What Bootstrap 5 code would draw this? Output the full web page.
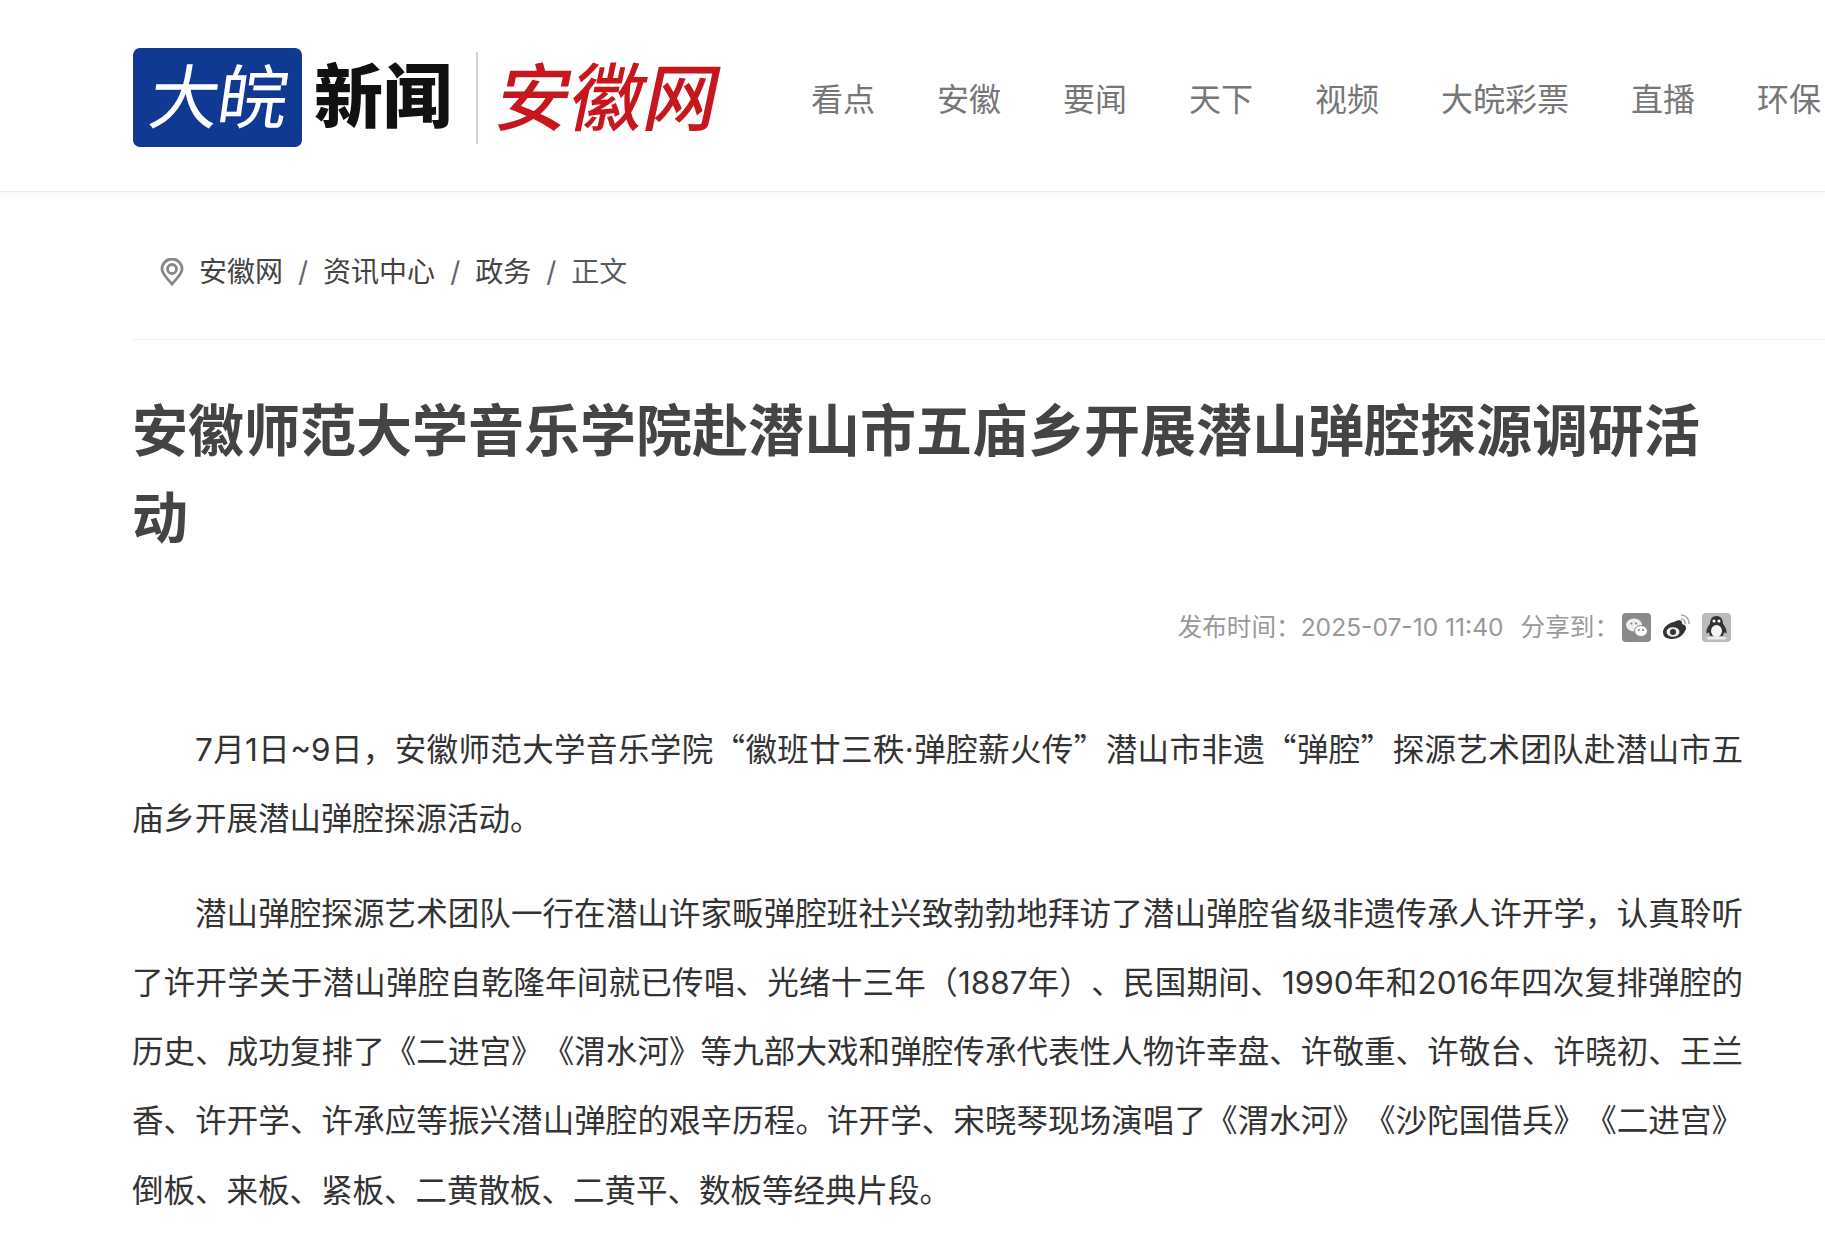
<!DOCTYPE html>
<html lang="zh-CN">
<head>
  <meta charset="UTF-8">
  <title>安徽师范大学音乐学院赴潜山市五庙乡开展潜山弹腔探源调研活动</title>
  <link href="https://cdn.jsdelivr.net/npm/bootstrap@5.3.0/dist/css/bootstrap.min.css" rel="stylesheet">
  <style>
    html, body { overflow: hidden; height: 100%; }
    body { font-family: Inter, "Noto Sans CJK SC", sans-serif; color: #333; background: #fff; text-spacing-trim: space-all; }
    .top-bar { height: 192px; padding: 4px 0 0 133px; border-bottom: 1px solid #ececec; box-shadow: 0 2px 8px rgba(0,0,0,.04); white-space: nowrap; }
    .logo-box { width: 169px; height: 99px; background: #103993; border-radius: 7px; color: #fff; font-size: 70px; line-height: 99px; letter-spacing: -2px; text-align: center; }
    .logo-box span { display: inline-block; transform: skewX(-8deg); }
    .logo-news { font-size: 69px; font-weight: 900; color: #111; line-height: 1; margin-left: 12px; }
    .logo-line { width: 2px; height: 92px; background: #d4d4d4; margin: 0 20px 0 24px; }
    .logo-red { font-size: 74px; font-weight: 500; color: #c8161d; line-height: 1; transform: skewX(-12deg); }
    .main-nav { margin-left: 91px; gap: 62px; flex-wrap: nowrap; }
    .main-nav .nav-link { padding: 5px 0 0; font-size: 32px; line-height: 44px; color: #777; }
    .page-body { padding-left: 132px; }
    .crumb-row { height: 148px; border-bottom: 1px solid #f0f0f0; padding: 12px 0 0 28px; gap: 15px; font-size: 28px; }
    .crumb-row .breadcrumb { --bs-breadcrumb-margin-bottom: 0; --bs-breadcrumb-item-padding-x: 15px; --bs-breadcrumb-divider-color: #666; }
    .crumb-row a { color: #444; text-decoration: none; }
    .news-title { width: 1611px; margin: 48px 0 0; font-size: 56px; line-height: 87px; font-weight: 700; color: #444; }
    .news-meta { width: 1599px; margin-top: 45px; height: 40px; font-size: 24.6px; color: #999; }
    .meta-date { margin-right: 17px; }
    .share-icons { gap: 11px; margin-left: 3px; }
    .news-text { width: 1611px; margin-top: 66px; font-size: 31.5px; line-height: 69.3px; color: #333; }
    .news-text p { margin-bottom: 25px; }
    .full-line { display: block; white-space: nowrap; text-align: justify; text-align-last: justify; }
    .first-line { text-indent: 2em; }
    .cjk-mark { font-family: "Noto Sans CJK SC", sans-serif; }
  </style>
</head>
<body>
  <header class="top-bar d-flex align-items-center">
    <a href="#" class="d-flex align-items-center text-decoration-none">
      <div class="logo-box"><span>大皖</span></div>
      <div class="logo-news">新闻</div>
      <div class="logo-line"></div>
      <div class="logo-red">安徽网</div>
    </a>
    <ul class="nav main-nav">
      <li class="nav-item"><a class="nav-link" href="#">看点</a></li>
      <li class="nav-item"><a class="nav-link" href="#">安徽</a></li>
      <li class="nav-item"><a class="nav-link" href="#">要闻</a></li>
      <li class="nav-item"><a class="nav-link" href="#">天下</a></li>
      <li class="nav-item"><a class="nav-link" href="#">视频</a></li>
      <li class="nav-item"><a class="nav-link" href="#">大皖彩票</a></li>
      <li class="nav-item"><a class="nav-link" href="#">直播</a></li>
      <li class="nav-item"><a class="nav-link" href="#">环保</a></li>
    </ul>
  </header>

  <main class="page-body">
    <nav class="crumb-row d-flex align-items-center">
      <svg width="24" height="28" viewBox="0 0 24 28">
        <path d="M12 26C7 20 2 16 2 11a10 10 0 0 1 20 0c0 5-5 9-10 15z" fill="none" stroke="#888" stroke-width="2.8"/>
        <circle cx="12" cy="11" r="4.5" fill="none" stroke="#888" stroke-width="2.8"/>
      </svg>
      <ol class="breadcrumb">
        <li class="breadcrumb-item"><a href="#">安徽网</a></li>
        <li class="breadcrumb-item"><a href="#">资讯中心</a></li>
        <li class="breadcrumb-item"><a href="#">政务</a></li>
        <li class="breadcrumb-item active">正文</li>
      </ol>
    </nav>

    <h1 class="news-title">安徽师范大学音乐学院赴潜山市五庙乡开展潜山弹腔探源调研活动</h1>

    <div class="news-meta d-flex justify-content-end align-items-center">
      <span class="meta-date">发布时间：2025-07-10 11:40</span>
      <span>分享到：</span>
      <div class="share-icons d-flex align-items-center">
        <svg width="29" height="29" viewBox="0 0 29 29">
          <rect width="29" height="29" rx="4" fill="#8a8a8a"/>
          <ellipse cx="12" cy="12" rx="8" ry="6.5" fill="#eee"/>
          <ellipse cx="19" cy="18" rx="6.5" ry="5.5" fill="#fff" stroke="#8a8a8a"/>
          <circle cx="9.5" cy="10.5" r="1" fill="#777"/><circle cx="14" cy="10.5" r="1" fill="#777"/>
          <circle cx="17" cy="17" r=".9" fill="#777"/><circle cx="21" cy="17" r=".9" fill="#777"/>
        </svg>
        <svg width="29" height="29" viewBox="0 0 29 29">
          <path d="M12 9c5-3 9-2 8 2 4 1 5 4 3 7-2 5-8 8-13 8S1 24 1 19c0-4 5-9 11-10z" fill="#333"/>
          <ellipse cx="11" cy="19" rx="6.5" ry="4.8" fill="#eee"/>
          <circle cx="11" cy="19" r="3" fill="#333"/>
          <path d="M19 2a8 8 0 0 1 8 9M19 6a4 4 0 0 1 4 5" fill="none" stroke="#aaa" stroke-width="1.6"/>
        </svg>
        <svg width="29" height="29" viewBox="0 0 29 29">
          <rect width="29" height="29" rx="4" fill="#bbb"/>
          <path d="M14.5 3c5 0 6.500 4 6.500 8 2 2 4 6 3.500 9-1 1-2-1-2.500-1 0 2-1 4-2 4H9c-1 0-2-2-2-4-.5 0-1.500 2-2.500 1-.5-3 1.500-7 3.500-9 0-4 1.500-8 6.500-8z" fill="#333"/>
          <ellipse cx="14.500" cy="18" rx="5.500" ry="6" fill="#f4f4f4"/>
          <circle cx="12" cy="8" r="1.500" fill="#fff"/><circle cx="17" cy="8" r="1.500" fill="#fff"/>
          <rect x="5" y="24" width="19" height="2.500" rx="1.200" fill="#eee"/>
        </svg>
      </div>
    </div>

    <article class="news-text">
      <p><span class="full-line first-line">7月1日~9日，安徽师范大学音乐学院<span class="cjk-mark">“</span>徽班廿三秩·弹腔薪火传<span class="cjk-mark">”</span>潜山市非遗<span class="cjk-mark">“</span>弹腔<span class="cjk-mark">”</span>探源艺术团队赴潜山市五</span>庙乡开展潜山弹腔探源活动。</p>
      <p><span class="full-line first-line">潜山弹腔探源艺术团队一行在潜山许家畈弹腔班社兴致勃勃地拜访了潜山弹腔省级非遗传承人许开学，认真聆听</span><span class="full-line">了许开学关于潜山弹腔自乾隆年间就已传唱、光绪十三年（1887年）、民国期间、1990年和2016年四次复排弹腔的</span><span class="full-line">历史、成功复排了《二进宫》《渭水河》等九部大戏和弹腔传承代表性人物许幸盘、许敬重、许敬台、许晓初、王兰</span><span class="full-line">香、许开学、许承应等振兴潜山弹腔的艰辛历程。许开学、宋晓琴现场演唱了《渭水河》《沙陀国借兵》《二进宫》</span>倒板、来板、紧板、二黄散板、二黄平、数板等经典片段。</p>
    </article>
  </main>

  <script src="https://cdn.jsdelivr.net/npm/bootstrap@5.3.0/dist/js/bootstrap.bundle.min.js"></script>
</body>
</html>
